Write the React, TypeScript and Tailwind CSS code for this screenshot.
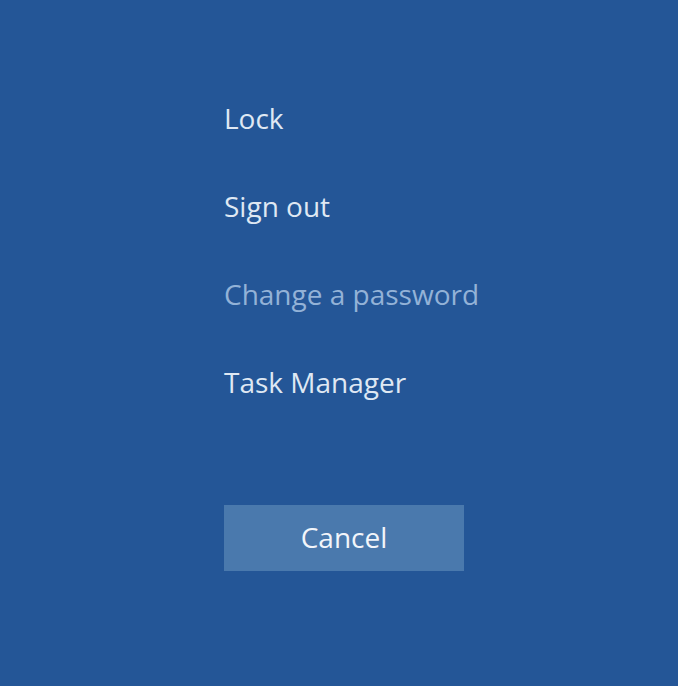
import React from 'react';

const items = [
  { label: 'Lock', disabled: false },
  { label: 'Sign out', disabled: false },
  { label: 'Change a password', disabled: true },
  { label: 'Task Manager', disabled: false },
];

export default function App() {
  return (
    <div
      className="flex h-[686px] w-[678px] flex-col bg-[#245697] pl-[224px] pt-[96px]"
      style={{ fontFamily: '"Open Sans", "Noto Sans", sans-serif' }}
    >
      {items.map(item => (
        <button
          key={item.label}
          disabled={item.disabled}
          className={`flex h-[88px] w-fit items-start text-left text-[28px] leading-[44px] ${
            item.disabled ? 'text-[#93b2d7]' : 'text-[#dfe8f3]'
          }`}
        >
          {item.label}
        </button>
      ))}
      <button className="mt-[57px] h-[66px] w-[240px] bg-[#4a79ad] pb-[2px] text-[28px] text-[#f2f5fa]">
        Cancel
      </button>
    </div>
  );
}
